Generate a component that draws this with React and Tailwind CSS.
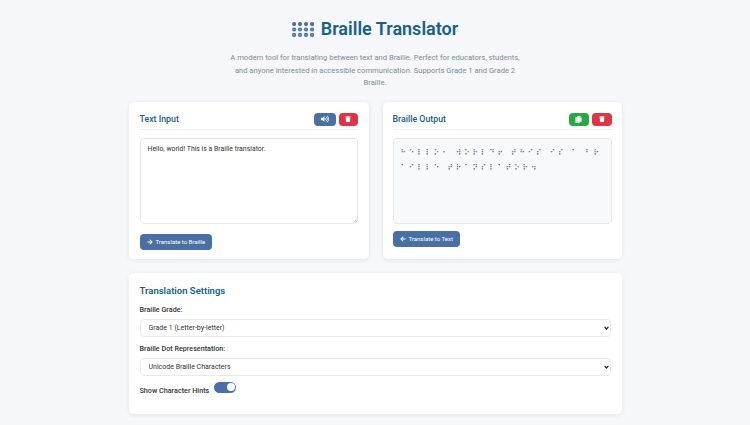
import { FaVolumeUp, FaTrash, FaCopy, FaArrowRight, FaArrowLeft } from 'react-icons/fa'

const LOGO_COLS = [2.1, 8, 14, 20]
const LOGO_ROWS = [2.1, 7.5, 12.9]

function BrailleLogo() {
  return (
    <svg width="22" height="15" viewBox="0 0 22 15">
      {LOGO_ROWS.map((y, r) => LOGO_COLS.map((x, c) => (
        <g key={`${r}-${c}`}>
          <circle cx={x} cy={y} r="2.1" fill="#4a6fa5" />
          {r > 0 && <circle cx={x} cy={y} r="0.8" fill="#8ca3c6" />}
        </g>
      )))}
    </svg>
  )
}

function IconButton({ color, width, children }) {
  return (
    <button className={`flex h-[13px] items-center justify-center rounded-[4px] text-white ${width} ${color}`}>
      {children}
    </button>
  )
}

function PanelHeader({ title, children }) {
  return (
    <div className="mb-[8px] flex h-[17px] items-start justify-between border-b border-[#f0f0f0]">
      <h2 className="text-[8.8px] font-medium leading-[13px] text-[#166088]">{title}</h2>
      <div className="flex gap-[3px]">{children}</div>
    </div>
  )
}

function ActionButton({ icon, label, className }) {
  return (
    <button className={`flex h-[16px] items-center gap-[3px] rounded-[4px] bg-[#4a6fa5] px-[7px] text-[6px] text-white ${className}`}>
      {icon}
      {label}
    </button>
  )
}

function SelectRow({ label, value, options }) {
  return (
    <div className="mb-[6px]">
      <label className="mb-[4px] block text-[7.2px] font-medium leading-[11px] text-[#333]">{label}</label>
      <div className="relative">
        <select defaultValue={value} className="block h-[18px] w-full appearance-none rounded-[4px] border border-[#e8e8e8] bg-white pl-[8px] pt-[1px] text-[7px] text-[#333]">
          {options.map(o => <option key={o}>{o}</option>)}
        </select>
        <svg className="absolute right-[2px] top-[7px]" width="5" height="4" viewBox="0 0 5 4">
          <path d="M0.6 0.8 L2.5 3 L4.4 0.8" stroke="#222" strokeWidth="1.2" fill="none" />
        </svg>
      </div>
    </div>
  )
}

export default function App() {
  return (
    <div className="h-[425px] w-[750px] overflow-hidden bg-[#f5f7fa] font-['Roboto',sans-serif]">
      <div className="mx-auto w-[493px]">
        <header className="pt-[19px] text-center">
          <div className="flex items-center justify-center gap-[7px]">
            <BrailleLogo />
            <h1 className="text-[18px] font-semibold leading-[20px] text-[#166088]">Braille Translator</h1>
          </div>
          <p className="mx-auto mt-[13px] w-[296px] text-[7.6px] leading-[12.5px] text-[#7f8b97]">
            A modern tool for translating between text and Braille. Perfect for educators, students, and anyone interested in accessible communication. Supports Grade 1 and Grade 2 Braille.
          </p>
        </header>

        <div className="mt-[12px] flex gap-[14px]">
          <section className="h-[157px] w-[240px] rounded-[5px] bg-white px-[11px] pt-[11px] shadow-[0_1px_5px_rgba(0,0,0,0.08)]">
            <PanelHeader title="Text Input">
              <IconButton width="w-[22px]" color="bg-[#4a6fa5]"><FaVolumeUp size={8} /></IconButton>
              <IconButton width="w-[19px]" color="bg-[#dc3545]"><FaTrash size={6} /></IconButton>
            </PanelHeader>
            <div className="relative">
              <textarea
                defaultValue="Hello, world! This is a Braille translator."
                className="block h-[86px] w-full resize-none rounded-[4px] border border-[#e8e8e8] px-[7px] py-[5px] text-[6.9px] leading-[10px] text-[#333]"
              />
              <svg className="absolute bottom-[1px] right-[1px]" width="4" height="4" viewBox="0 0 4 4">
                <path d="M0.5 3.5 L3.5 0.5 M2.2 3.5 L3.5 2.2" stroke="#999" strokeWidth="0.6" />
              </svg>
            </div>
            <ActionButton className="mt-[10px]" icon={<FaArrowRight size={6} />} label="Translate to Braille" />
          </section>

          <section className="h-[157px] w-[239px] rounded-[5px] bg-white px-[10px] pt-[11px] shadow-[0_1px_5px_rgba(0,0,0,0.08)]">
            <PanelHeader title="Braille Output">
              <IconButton width="w-[20px]" color="bg-[#28a745]"><FaCopy size={7} /></IconButton>
              <IconButton width="w-[20px]" color="bg-[#dc3545]"><FaTrash size={6} /></IconButton>
            </PanelHeader>
            <div className="h-[86px] break-all rounded-[4px] border border-[#e8e8e8] bg-[#f8f9fa] py-[6px] pl-[7px] pr-[5px] font-['DejaVu_Sans',sans-serif] text-[7.5px] leading-[15.5px] tracking-[2.85px] text-[#333]">
              ⠓⠑⠇⠇⠕⠂ ⠺⠕⠗⠇⠙⠖ ⠞⠓⠊⠎ ⠊⠎ ⠁ ⠃⠗⠁⠊⠇⠇⠑ ⠞⠗⠁⠝⠎⠇⠁⠞⠕⠗⠲
            </div>
            <ActionButton className="mt-[7px]" icon={<FaArrowLeft size={6} />} label="Translate to Text" />
          </section>
        </div>

        <section className="mt-[14px] h-[141px] rounded-[5px] bg-white px-[11px] pt-[11px] shadow-[0_1px_5px_rgba(0,0,0,0.08)]">
          <h2 className="mb-[7px] text-[9.5px] font-semibold leading-[13px] text-[#166088]">Translation Settings</h2>
          <SelectRow label="Braille Grade:" value="Grade 1 (Letter-by-letter)" options={['Grade 1 (Letter-by-letter)', 'Grade 2 (Contracted)']} />
          <SelectRow label="Braille Dot Representation:" value="Unicode Braille Characters" options={['Unicode Braille Characters', 'Dot Numbers']} />
          <div className="flex items-start gap-[5px]">
            <span className="mt-[3px] text-[7.2px] font-medium leading-[11px] text-[#333]">Show Character Hints</span>
            <span className="flex h-[11px] w-[22px] items-center justify-end rounded-full bg-[#4a6fa5] pr-[1.5px]">
              <span className="h-[8px] w-[8px] rounded-full bg-white" />
            </span>
          </div>
        </section>
      </div>
    </div>
  )
}
